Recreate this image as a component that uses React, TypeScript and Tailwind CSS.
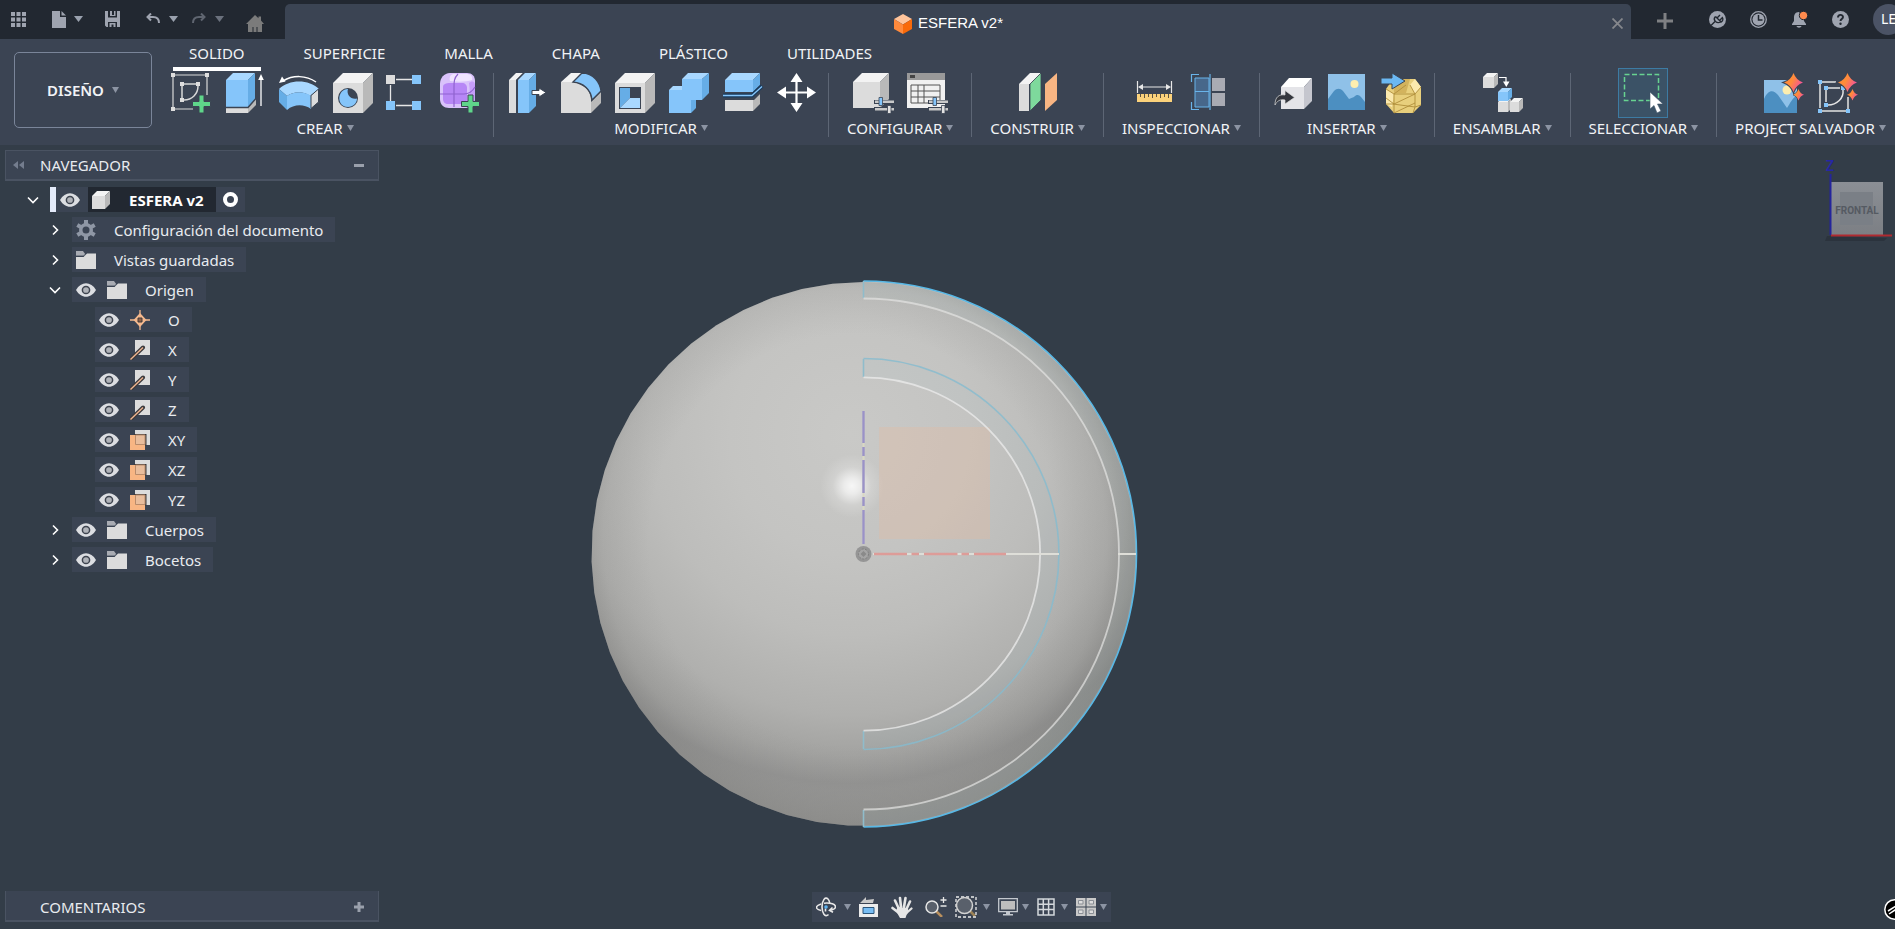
import type { ReactNode } from "react";

const BG = "#3b4453";
const BLUE = "#85c5fa";
const BLUE_TOP = "#a9d8ff";
const BLUE_SIDE = "#66ade6";

// ---------- shared pieces ----------

function Caret({ className = "text-[#9aa1ae]" }: { className?: string }) {
  return (
    <svg width="9" height="6" viewBox="0 0 9 6" className={`shrink-0 ${className}`} aria-hidden="true">
      <path d="M0 0h9L4.5 6z" fill="currentColor" />
    </svg>
  );
}

function SmallCaret() {
  return (
    <svg width="7" height="6" viewBox="0 0 7 6" className="shrink-0 text-[#8c94a3]" aria-hidden="true">
      <path d="M0 0h7L3.5 6z" fill="currentColor" />
    </svg>
  );
}

type BoxProps = { x: number; y: number; w: number; h: number; d: number; blue?: boolean };

// Box in oblique projection: x,y is the top left of the front face
function Box({ x, y, w, h, d, blue }: BoxProps) {
  return (
    <g>
      <path d={`M${x} ${y}h${w}v${h}h${-w}z`} fill={blue ? BLUE : "#dcdcdc"} />
      <path d={`M${x} ${y}l${d} ${-d}h${w}l${-d} ${d}z`} fill={blue ? BLUE_TOP : "#f3f3f3"} />
      <path d={`M${x + w} ${y}l${d} ${-d}v${h}l${-d} ${d}z`} fill={blue ? BLUE_SIDE : "#b9b9b9"} />
    </g>
  );
}

function Icon({ children }: { children: ReactNode }) {
  return (
    <svg width="40" height="40" viewBox="0 0 40 40" className="block overflow-visible" aria-hidden="true">
      {children}
    </svg>
  );
}

function Plus({ x, y }: { x: number; y: number }) {
  return (
    <path
      d={`M${x - 3} ${y - 9}h5v6.500h6.500v5h-6.500v6.500h-5v-6.500h-6.500v-5h6.500z`}
      fill="#5fd68a"
      stroke={BG}
      strokeWidth="1"
    />
  );
}

function Sliders() {
  return (
    <g>
      <path d="M21 27h20v4H21zM21 34h20v4H21z" fill={BG} />
      <path d="M22 27.500h19v2.500H22zM22 35h19v2.500H22z" fill="#c9c9c9" />
      <path d="M26 24.500h3.500v8H26z" fill={BLUE} stroke={BG} strokeWidth="0.800" />
      <path d="M34.500 32.500h3.500v8h-3.500z" fill="#e2e2e2" stroke={BG} strokeWidth="0.800" />
    </g>
  );
}

function Sparkles() {
  return (
    <g fill="url(#sparkle)">
      <path
        d="M30.500 0Q33 7 40 9.500Q33 12 30.500 19Q28 12 21 9.500Q28 7 30.500 0z"
        stroke={BG}
        strokeWidth="2"
        paintOrder="stroke"
      />
      <path
        d="M35.500 16Q37 20.500 41 21.700Q37 23 35.500 27.500Q34 23 30 21.700Q34 20.500 35.500 16z"
        stroke={BG}
        paintOrder="stroke"
      />
    </g>
  );
}

// ---------- ribbon icons ----------

const sketchIcon = (
  <Icon>
    <g stroke="#d9d9d9" strokeWidth="1.200" fill="none">
      <path d="M4 2h30M2 4v30M36 4v18M4 36h18" />
      <path d="M13 11h12M11 13v12M27 13c0 8-6 14-14 14" strokeWidth="1.500" />
    </g>
    <path d="M0 0h4v4H0zM34 0h4v4h-4zM0 34h4v4H0zM9 9h4v4H9zM25 9h4v4h-4zM9 25h4v4H9z" fill="#dedede" />
    <Plus x={31} y={31} />
  </Icon>
);

const extrudeIcon = (
  <Icon>
    <path d="M1 34h22v6H1z" fill="#dcdcdc" />
    <path d="M23 34l8-8v6l-8 8z" fill="#b9b9b9" />
    <Box x={1} y={7} w={22} h={27} d={7} blue />
    <path d="M1 34.500h22l7.500-8.500" stroke={BG} strokeWidth="1.500" fill="none" />
    <path d="M36 33V5" stroke="#fff" strokeWidth="1.300" />
    <path d="M36 1l2.800 6h-5.600z" fill="#fff" />
  </Icon>
);

const revolveIcon = (
  <Icon>
    <path d="M4 8C14 2 27 2 37 9" stroke="#fff" strokeWidth="1.500" fill="none" />
    <path d="M0 10l3-6.500 3.500 5z" fill="#fff" />
    <path d="M0 16C10 6 30 6 40 16l-9 7C25 18 15 18 8 23z" fill={BLUE_TOP} />
    <path d="M0 16l8 7v14l-8-8z" fill={BLUE_SIDE} />
    <path d="M8 23c7-5 17-5 24 0v13c-7-5-17-5-24 1z" fill={BLUE} />
    <path d="M32 22.500l7.500-6.500v13L32 35.500z" fill="#dcdcdc" stroke={BG} />
  </Icon>
);

const holeIcon = (
  <Icon>
    <Box x={0} y={10} w={30} h={30} d={10} />
    <circle cx="15" cy="25" r="10" fill={BG} />
    <path d="M15 16c-11 0-12 18 0 18 5 0 9-4 9-8.500-6 1.500-11-4-9-9.500z" fill={BLUE} />
  </Icon>
);

const patternIcon = (
  <Icon>
    <path d="M9 6.500h16M9 32.500h16M3.500 12v16" stroke="#e6e6e6" strokeWidth="1.300" />
    <path d="M-1 2h9v9h-9z" fill="#dcdcdc" />
    <path d="M25 2h9v9h-9zM-1 28h9v9h-9zM25 28h9v9h-9z" fill={BLUE} />
  </Icon>
);

const formIcon = (
  <Icon>
    <path d="M9 0h17c5 0 8 3 8 8v18c0 5-4 9-9 9H8c-5 0-9-3-9-9V11C-1 5 3 0 9 0z" fill="#d9c2fb" />
    <path d="M9 10h12c3 0 5 2 5 5v11c0 3-2 5-5 5H7c-3 0-5-2-5-5V14c0-3 3-4 7-4z" fill="#b787f6" />
    <path d="M12 1h14c4 0 6 3 5 6-5 2-16 2-22 1-1-3 0-6 3-7z" fill="#efe4ff" />
    <path d="M28 10c4-3 6-1 6 2v12c0 4-3 6-6 6 1-6 1-14 0-20z" fill="#c59df9" />
    <path d="M17 1c-4 4-4 8-4 13v20M-1 21h24c5 0 8-2 11-7" stroke="#8f63cf" strokeWidth="1.200" fill="none" />
    <Plus x={30} y={31} />
  </Icon>
);

const pressPullIcon = (
  <Icon>
    <Box x={2} y={7} w={7} h={33} d={7} />
    <path d="M9 7l7-7v40H9z" fill={BG} />
    <Box x={11} y={7} w={11} h={33} d={7} blue />
    <path d="M25 17.500h7V15l7 4.500-7 4.500v-2.500h-7z" fill="#fff" stroke={BG} strokeWidth="1" />
  </Icon>
);

const filletIcon = (
  <Icon>
    <path d="M0 9h12c12 2 18 10 18 18v13H0z" fill="#dcdcdc" />
    <path d="M0 9l10-9h11l-9 9z" fill="#f3f3f3" />
    <path d="M30 29l10-10v11L30 40z" fill="#b9b9b9" />
    <path d="M12 9l9-9c12 0 18 10 19 18l-9 9C30 16 22 10 12 9z" fill={BLUE} stroke={BG} strokeWidth="1.300" />
  </Icon>
);

const shellIcon = (
  <Icon>
    <Box x={0} y={10} w={30} h={30} d={10} />
    <path d="M4 14h22v22H4z" fill={BG} />
    <path d="M5 15h10v10L5 35z" fill={BLUE_SIDE} />
    <path d="M5 35l10-10h10v10z" fill={BLUE_TOP} />
  </Icon>
);

const combineIcon = (
  <Icon>
    <path d="M0 17h13V6h20v21H22v13H0z" fill={BLUE} />
    <path d="M0 17l4-4h9v4zM13 6l6-6h21l-7 6z" fill={BLUE_TOP} />
    <path d="M33 6l7-6v20l-7 7zM22 27h5v8l-5 5z" fill={BLUE_SIDE} />
  </Icon>
);

const splitIcon = (
  <Icon>
    <Box x={2} y={26} w={28} h={12} d={7} />
    <path d="M0 17h30l7-7h3v8l-9 9H0z" fill={BG} />
    <Box x={2} y={7} w={28} h={12} d={7} blue />
    <path d="M0 22.500h29l10-9.500" stroke="#183a5c" strokeWidth="4" fill="none" />
    <path d="M0 22.500h29l10-9" stroke={BLUE} strokeWidth="1.300" fill="none" />
  </Icon>
);

const moveIcon = (
  <Icon>
    <path d="M19.500 6v27M6 19.500h27" stroke="#fff" strokeWidth="2.200" />
    <path d="M19.500 0l6 9h-12zM19.500 39l6-9h-12zM0 19.500l9-6v12zM39 19.500l-9-6v12z" fill="#fff" />
  </Icon>
);

const configureIcon = (
  <Icon>
    <Box x={0} y={9} w={27} h={26} d={9} />
    <Sliders />
  </Icon>
);

const tableIcon = (
  <Icon>
    <path d="M0 0h38v35H0z" fill="#f1f1f1" />
    <path d="M0 0h38v7H0z" fill="#999" />
    <path d="M3 2h5v3H3z" fill="#444" />
    <path d="M4 12h29v18H4zM4 18h29M4 24h29M11 12v18M17 12v18" stroke="#555" fill="none" />
    <Sliders />
  </Icon>
);

const planeIcon = (
  <Icon>
    <path d="M1 11h10v27H1z" fill="#dcdcdc" />
    <path d="M1 11L12 0h11L12 11z" fill="#f3f3f3" />
    <path d="M12 11L23 0v27L12 38z" fill="#7ed99c" stroke={BG} strokeWidth="0.800" />
    <path d="M27 11L39 0v27L27 38z" fill="#f8b583" />
  </Icon>
);

const measureIcon = (
  <Icon>
    <path d="M3.500 8v12M37.500 8v12M6 14h29" stroke="#e8e8e8" strokeWidth="1.200" />
    <path d="M4 14l5-3v6zM37 14l-5-3v6z" fill="#e8e8e8" />
    <path d="M3 21h35v8H3z" fill="#fbd27b" />
    <path d="M6.500 21v3M10.500 21v4M14.500 21v3M18.500 21v4M22.500 21v3M26.500 21v4M30.500 21v3M34.500 21v4" stroke="#5d5340" />
  </Icon>
);

const sectionIcon = (
  <Icon>
    <path d="M24 5h13v13H24zM24 20h13v13H24z" fill="#a9abb3" />
    <path d="M7 5h14v29H7z" fill="#47678a" />
    <path d="M7 5h14v29H7zM7 18.500h14" stroke="#69b4ea" fill="none" />
    <path d="M22 1v36M11 1.500H3.500V9M11 36.500H3.500V29" stroke="#69b4ea" strokeWidth="1.200" fill="none" />
  </Icon>
);

const insertIcon = (
  <Icon>
    <path d="M8 14h23v22H8z" fill="#e4e4e8" />
    <path d="M8 14l8-9h23l-8 9z" fill="#fff" />
    <path d="M31 14l8-9v23l-8 8z" fill="#c5c6ce" />
    <path d="M2 32c0-8 4-11 10-10v-4.500l9.500 7L12 31v-4c-5-1-8 1-10 5z" fill="#34373e" stroke="#dcdcdc" strokeWidth="0.700" />
  </Icon>
);

const canvasIcon = (
  <Icon>
    <path d="M1 1h37v36H1z" fill="#8fc1e8" />
    <circle cx="27.500" cy="11" r="4" fill="#fdeeb0" />
    <path d="M1 26l6-8c3-3 6-3 9 0l6 8 5-2c3-3 5-2 7 0l4 5v8H1z" fill="#4c8fc1" />
  </Icon>
);

const meshIcon = (
  <Icon>
    <path d="M12 6h22l6 8v18l-8 8H13l-8-9V16z" fill="#e8cf7c" />
    <path d="M5 16l8 5-2 13-6-3zM34 6l6 8-6 7-5-9z" fill="#fbe9ae" />
    <path d="M12 6h17l-4 14H13z" fill="#d3b35d" />
    <path d="M5 16l8 5 21 0 6-7M29 12l5 9M13 21l12-9M5 31l8 0 21-10M13 21l0 19M12 31l22 3V21M40 32l-6 2-2 6M13 40l21-10M5 25l8 6" stroke="#b08f3b" strokeWidth="0.900" fill="none" />
    <path d="M0 5h11V0l13 8-13 8v-5H0z" fill="#6bb8f2" stroke={BG} />
  </Icon>
);

const assembleIcon = (
  <Icon>
    <Box x={1} y={4} w={11} h={11} d={4} />
    <path d="M17 4.500h7V11" stroke="#fff" strokeWidth="1.200" fill="none" />
    <path d="M21 8.500h6.500L24.300 14z" fill="#fff" />
    <Box x={16} y={29} w={10} h={10} d={3} />
    <Box x={28} y={29} w={9} h={10} d={4} />
    <Box x={16} y={19} w={10} h={9} d={4} blue />
  </Icon>
);

const selectIcon = (
  <Icon>
    <path d="M1.500 1.500h34v26h-34z" stroke="#67d391" strokeWidth="1.500" strokeDasharray="5 2.500" fill="none" />
    <path d="M27 19v17l4-3.500 3 7.500 4-2-3.500-7H40z" fill="#fff" stroke="#3d5266" strokeWidth="0.600" />
  </Icon>
);

const aiImageIcon = (
  <Icon>
    <path d="M1 7h33v33H1z" fill="#8fc1e8" />
    <path d="M1 26c4-9 9-10 14-4l9 13c4-6 4-8 10-13v18H1z" fill="#4c8fc1" />
    <circle cx="24" cy="17" r="4.500" fill="#fdeeb0" />
    <Sparkles />
  </Icon>
);

const aiSketchIcon = (
  <Icon>
    <g stroke="#e4e4e4" strokeWidth="1.500" fill="none">
      <path d="M5 9h14M3 11v24M5 38h24M31 24v12" />
      <path d="M11 15h12M9 17v12M26 17c1 8-6 15-15 15" />
    </g>
    <path d="M1 7h4v4H1zM1 36h4v4H1zM29 36h4v4h-4zM7 13h4v4H7zM24 13h4v4h-4zM7 30h4v4H7z" fill={BLUE} />
    <Sparkles />
  </Icon>
);

type Tool = { name: string; icon: ReactNode; active?: boolean };

const TABS = ["SOLIDO", "SUPERFICIE", "MALLA", "CHAPA", "PLÁSTICO", "UTILIDADES"];

const GROUPS: { label: string; tools: Tool[] }[] = [
  {
    label: "CREAR",
    tools: [
      { name: "Crear boceto", icon: sketchIcon },
      { name: "Extruir", icon: extrudeIcon },
      { name: "Revolución", icon: revolveIcon },
      { name: "Agujero", icon: holeIcon },
      { name: "Patrón", icon: patternIcon },
      { name: "Crear forma", icon: formIcon },
    ],
  },
  {
    label: "MODIFICAR",
    tools: [
      { name: "Pulsar/Tirar", icon: pressPullIcon },
      { name: "Empalme", icon: filletIcon },
      { name: "Vaciado", icon: shellIcon },
      { name: "Combinar", icon: combineIcon },
      { name: "Dividir", icon: splitIcon },
      { name: "Mover", icon: moveIcon },
    ],
  },
  {
    label: "CONFIGURAR",
    tools: [
      { name: "Configurar modelo", icon: configureIcon },
      { name: "Tabla", icon: tableIcon },
    ],
  },
  { label: "CONSTRUIR", tools: [{ name: "Plano", icon: planeIcon }] },
  {
    label: "INSPECCIONAR",
    tools: [
      { name: "Medir", icon: measureIcon },
      { name: "Sección", icon: sectionIcon },
    ],
  },
  {
    label: "INSERTAR",
    tools: [
      { name: "Insertar derivado", icon: insertIcon },
      { name: "Lienzo", icon: canvasIcon },
      { name: "Insertar malla", icon: meshIcon },
    ],
  },
  { label: "ENSAMBLAR", tools: [{ name: "Unión", icon: assembleIcon }] },
  { label: "SELECCIONAR", tools: [{ name: "Seleccionar", icon: selectIcon, active: true }] },
  {
    label: "PROJECT SALVADOR",
    tools: [
      { name: "Imagen", icon: aiImageIcon },
      { name: "Boceto", icon: aiSketchIcon },
    ],
  },
];

// ---------- title bar ----------

function TitleBar() {
  return (
    <header className="flex h-[39px] bg-[#222831] text-[#9fa4b0]">
      <div className="flex w-[285px] shrink-0 items-center gap-[22px] pb-px pl-[11px]">
        <button aria-label="Panel de datos" className="mr-1">
          <svg width="15" height="15" viewBox="0 0 15 15" fill="currentColor">
            <path d="M0 0h4v4H0zM5.500 0h4v4h-4zM11 0h4v4h-4zM0 5.500h4v4H0zM5.500 5.500h4v4h-4zM11 5.500h4v4h-4zM0 11h4v4H0zM5.500 11h4v4h-4zM11 11h4v4h-4z" />
          </svg>
        </button>
        <button aria-label="Archivo" className="flex items-center gap-2">
          <svg width="14" height="17" viewBox="0 0 14 17" fill="currentColor">
            <path d="M0 0h8v6h6v11H0z" />
            <path d="M9.500 0L14 4.500H9.500z" />
          </svg>
          <Caret />
        </button>
        <button aria-label="Guardar" className="mr-1">
          <svg width="15" height="16" viewBox="0 0 15 16" fill="currentColor">
            <path fillRule="evenodd" d="M0 0h3v6.500h9V0h3v16h-3v-5H3v5H1.500L0 14.500z" />
            <path d="M5 0h2v4h2V0h1.500v5H5zM4.500 12h6v4h-2v-2.500h-2V16h-2z" />
          </svg>
        </button>
        <div className="flex gap-[14px]">
          <button aria-label="Deshacer" className="flex items-center gap-[9px]">
            <svg width="14" height="12" viewBox="0 0 14 12" fill="none" stroke="currentColor" strokeWidth="2">
              <path d="M5 .500L1.500 4 5 7.500M2 4h5c4 0 6 2 6 6" />
            </svg>
            <Caret />
          </button>
          <button aria-label="Rehacer" className="flex items-center gap-[9px] text-[#5f6570]">
            <svg width="14" height="12" viewBox="0 0 14 12" fill="none" stroke="currentColor" strokeWidth="2">
              <path d="M9 .500L12.500 4 9 7.500M12 4H7c-4 0-6 2-6 6" />
            </svg>
            <Caret className="text-[#6b717d]" />
          </button>
        </div>
        <button aria-label="Inicio" className="pt-2 text-[#7b7b7b]">
          <svg width="18" height="17" viewBox="0 0 18 17" fill="currentColor">
            <path d="M9 0l3.500 3.200V1.500H15v4L18 9h-2v8h-4.500v-5h-1v5h-3v-5h-1v5H2V9H0z" />
          </svg>
        </button>
      </div>

      <div className="mt-1 flex flex-1 items-center rounded-t-[5px] bg-[#3b4453] pt-1">
        <div className="flex flex-1 items-center justify-center gap-[6px] font-['Liberation_Sans',Arial,sans-serif] text-[15px] text-white">
          <svg width="18" height="20" viewBox="0 0 18 20" aria-hidden="true">
            <path d="M9 0l9 5-9 5.500L0 5z" fill="#ffc49b" />
            <path d="M0 5l9 5.500V20l-9-5z" fill="#ff8a3c" />
            <path d="M18 5l-9 5.500V20l9-5z" fill="#f96a0a" />
          </svg>
          <span>ESFERA v2*</span>
        </div>
        <button aria-label="Cerrar pestaña" className="mr-2 text-[#85878c]">
          <svg width="11" height="11" viewBox="0 0 11 11" stroke="currentColor" strokeWidth="1.800">
            <path d="M.500 .500l10 10M10.500 .500l-10 10" />
          </svg>
        </button>
      </div>

      <div className="flex w-[264px] shrink-0 items-center overflow-hidden pb-px pl-[26px]">
        <button aria-label="Nuevo diseño" className="mr-[36px] pt-1 text-[#7f8083]">
          <svg width="16" height="16" viewBox="0 0 16 16" fill="currentColor">
            <path d="M6.500 0h3v6.500H16v3H9.500V16h-3V9.500H0v-3h6.500z" />
          </svg>
        </button>
        <div className="flex shrink-0 items-center gap-6">
          <button aria-label="Extensiones">
            <svg width="17" height="17" viewBox="0 0 17 17">
              <circle cx="8.500" cy="8.500" r="8.500" fill="#9fa4b0" />
              <path d="M2 14.500l4-4M6.500 5.500l5.500 5.500c2-1 2.500-3 1-5M6.500 5.500c-1.500 1.500-1.500 3.500 0 5 1.500 1.300 3.500 1.300 5 .5M8.500 6.500l2.500-2.500M11 9l2.500-2.500" stroke="#222831" strokeWidth="1.400" fill="none" />
            </svg>
          </button>
          <button aria-label="Estado de trabajos">
            <svg width="17" height="17" viewBox="0 0 17 17">
              <circle cx="8.500" cy="8.500" r="7.800" fill="none" stroke="#9fa4b0" strokeWidth="1.300" />
              <circle cx="8.500" cy="8.500" r="6" fill="#9fa4b0" />
              <path d="M8.500 4v5h4" stroke="#222831" strokeWidth="1.500" fill="none" />
            </svg>
          </button>
          <button aria-label="Notificaciones">
            <svg width="17" height="17" viewBox="0 0 17 17">
              <path d="M8 1c-4 0-5 3-5 6v3l-2 3v1h14v-1l-2-3V8z" fill="#9fa4b0" />
              <path d="M5.500 15h5c-.5 2.300-4.500 2.300-5 0z" fill="#9fa4b0" />
              <circle cx="12.500" cy="4.500" r="4.200" fill="#ff8a4d" stroke="#222831" />
            </svg>
          </button>
          <button aria-label="Ayuda">
            <svg width="17" height="17" viewBox="0 0 17 17">
              <circle cx="8.500" cy="8.500" r="8.500" fill="#9fa4b0" />
              <path d="M6 6.500c0-3.500 5-3.300 5-.5 0 2-2.500 2-2.500 4" stroke="#222831" strokeWidth="1.900" fill="none" />
              <circle cx="8.500" cy="12.800" r="1.200" fill="#222831" />
            </svg>
          </button>
          <button className="size-[31px] rounded-full bg-[#4b5365] text-sm text-white">LE</button>
        </div>
      </div>
    </header>
  );
}

// ---------- ribbon ----------

function Ribbon() {
  return (
    <div className="flex h-[106px] overflow-hidden bg-[#3b4453] text-[15px] leading-5 text-[#f1f3f6]">
      <button className="mt-[13px] ml-[14px] flex h-[76px] w-[138px] shrink-0 items-center justify-center gap-2 rounded-[5px] border border-[#7a8599] font-semibold">
        DISEÑO
        <SmallCaret />
      </button>

      <div className="ml-[6px] flex flex-col">
        <nav className="ml-[15px] flex gap-[27px]">
          {TABS.map((tab, i) => (
            <button
              key={tab}
              className={`h-8 border-b-4 px-4 leading-5 ${i === 0 ? "border-white" : "border-transparent"}`}
            >
              {tab}
            </button>
          ))}
        </nav>

        <div className="mt-[2px] flex">
          {GROUPS.map((group, i) => (
            <section
              key={group.label}
              className={`flex h-16 shrink-0 flex-col items-center ${i < GROUPS.length - 1 ? "border-r border-[#5d6675]" : ""} ${i === 0 ? "pr-px" : ""}`}
            >
              <div className={`flex h-10 items-center gap-[14px] ${i < 2 ? "pr-[11px] pl-[13px]" : "px-[13px]"}`}>
                {group.tools.map((tool) => (
                  <button
                    key={tool.name}
                    aria-label={tool.name}
                    className={tool.active ? "-my-1 border border-[#3d7ba3] bg-[#3b5266] p-1" : ""}
                  >
                    {tool.icon}
                  </button>
                ))}
              </div>
              <button className="mt-[5px] flex items-center gap-1 px-[18px] whitespace-nowrap">
                {group.label}
                <SmallCaret />
              </button>
            </section>
          ))}
        </div>
      </div>

      <svg width="0" height="0" aria-hidden="true">
        <defs>
          <linearGradient id="sparkle" x1="0.200" y1="0.300" x2="0.900" y2="0.700">
            <stop offset="0.300" stopColor="#ff8c3a" />
            <stop offset="1" stopColor="#f4509f" />
          </linearGradient>
        </defs>
      </svg>
    </div>
  );
}

// ---------- browser tree ----------

const eyeIcon = (
  <svg width="20" height="14" viewBox="0 0 20 14" className="block" aria-hidden="true">
    <path d="M0 7c5-9 15-9 20 0-5 9-15 9-20 0z" fill="#dcdee2" />
    <circle cx="10" cy="7" r="3.600" fill="#b0b3b9" stroke="#3f4550" strokeWidth="1.500" />
  </svg>
);

const folderIcon = (
  <svg width="20" height="18" viewBox="0 0 20 18" aria-hidden="true">
    <path d="M0 0h7l2.500 3.500L8 5H0z" fill="#a9acb3" />
    <path d="M0 6h7.500L11 2.500h9V18H0z" fill="#dcdcdc" />
    <path d="M0 5h7.500l2.500-2.500" stroke={BG} strokeWidth="0.800" fill="none" />
  </svg>
);

const gearIcon = (
  <svg width="20" height="20" viewBox="0 0 20 20" aria-hidden="true">
    <path d="M8 0h4v20H8z M0.300 6.700l2-3.500 17.400 10.100-2 3.500z M2.300 16.800l-2-3.500L17.700 3.200l2 3.500z" fill="#8f97a5" />
    <circle cx="10" cy="10" r="7" fill="#8f97a5" />
    <circle cx="10" cy="10" r="3.500" fill={BG} />
  </svg>
);

const pointIcon = (
  <svg width="20" height="20" viewBox="0 0 20 20" aria-hidden="true">
    <path d="M10 0v20M0 10h20" stroke="#f5b98e" strokeWidth="1.300" />
    <path d="M10 3l6.500 7-6.500 7-6.500-7z" fill="#f5b98e" />
    <path d="M8 8h4v4H8z" fill="#8c5f49" stroke="#3f3a3a" />
  </svg>
);

const axisIcon = (
  <svg width="20" height="20" viewBox="0 0 20 20" aria-hidden="true">
    <path d="M5 0h15v15H5z" fill="#dcdcdc" />
    <path d="M1 19L13 7.500" stroke="#3c3a3d" strokeWidth="4" strokeLinecap="round" />
    <path d="M.500 19.500L13 7.500" stroke="#f0b58f" strokeWidth="1.400" />
  </svg>
);

const planeTreeIcon = (
  <svg width="20" height="20" viewBox="0 0 20 20" aria-hidden="true">
    <path d="M5 0h15v15H5z" fill="#dcdcdc" />
    <path d="M4 4h12.500v12H4z" fill="#3c3a3d" />
    <path d="M0 5h15v15H0z" fill="#f8b583" />
    <path d="M5.500 5h9.500v9.500H5.500z" fill="#e9bd9c" stroke="#b98b6b" />
  </svg>
);

type Node = { label: string; level: 1 | 2; icon: ReactNode; eye?: boolean; open?: boolean };

const NODES: Node[] = [
  { label: "Configuración del documento", level: 1, icon: gearIcon },
  { label: "Vistas guardadas", level: 1, icon: folderIcon },
  { label: "Origen", level: 1, icon: folderIcon, eye: true, open: true },
  { label: "O", level: 2, icon: pointIcon, eye: true },
  { label: "X", level: 2, icon: axisIcon, eye: true },
  { label: "Y", level: 2, icon: axisIcon, eye: true },
  { label: "Z", level: 2, icon: axisIcon, eye: true },
  { label: "XY", level: 2, icon: planeTreeIcon, eye: true },
  { label: "XZ", level: 2, icon: planeTreeIcon, eye: true },
  { label: "YZ", level: 2, icon: planeTreeIcon, eye: true },
  { label: "Cuerpos", level: 1, icon: folderIcon, eye: true },
  { label: "Bocetos", level: 1, icon: folderIcon, eye: true },
];

function Chevron({ open }: { open?: boolean }) {
  return (
    <button aria-label={open ? "Contraer" : "Expandir"} className="mr-2 flex w-[18px] shrink-0 justify-center">
      <svg width="12" height="12" viewBox="0 0 12 12" fill="none" stroke="#fff" strokeWidth="1.600">
        <path d={open ? "M1 3.500l5 5 5-5" : "M4 1.500l4.500 4.500L4 10.500"} />
      </svg>
    </button>
  );
}

function Browser() {
  return (
    <aside className="flex flex-col text-[15px] leading-5 text-[#e8ebef]">
      <div className="mt-[5px] ml-[5px] flex h-[31px] w-[374px] items-center border border-b-2 border-[#4a5362] bg-[#3b4453] pr-[14px] pl-[7px]">
        <button aria-label="Ocultar navegador">
          <svg width="11" height="8" viewBox="0 0 11 8" fill="#747d8e">
            <path d="M5 0v8L0 4zM11 0v8L6 4z" />
          </svg>
        </button>
        <h2 className="ml-4 flex-1">NAVEGADOR</h2>
        <button aria-label="Minimizar" className="h-[3px] w-[10px] bg-[#9aa0ac]" />
      </div>

      <ul className="mt-[6px] flex flex-col gap-[5px]">
        <li className="flex h-[25px] items-center pl-6">
          <Chevron open />
          <span className="h-full w-[6px] bg-[#e4ebfa]" />
          <div className="flex h-full items-center bg-[#3b4453]">
            <button aria-label="Visibilidad" className="px-1">
              {eyeIcon}
            </button>
            <button className="ml-1 flex h-full items-center gap-[19px] bg-[#222831] pr-3 pl-1 font-bold text-white">
              <svg width="18" height="18" viewBox="0 0 18 18" aria-hidden="true">
                <Box x={0} y={5} w={13} h={13} d={5} />
              </svg>
              ESFERA v2
            </button>
            <label className="flex px-[7px]">
              <input
                type="radio"
                defaultChecked
                aria-label="Activar componente"
                className="size-[15px] appearance-none rounded-full border-4 border-white bg-[#3b4453]"
              />
            </label>
          </div>
        </li>

        {NODES.map((node) => (
          <li
            key={node.label}
            className={`flex h-[25px] items-center ${node.level === 1 ? "pl-[46px]" : "pl-[95px]"}`}
          >
            {node.level === 1 && <Chevron open={node.open} />}
            <div className="flex h-full items-center bg-[#3b4453] pr-3 pl-1">
              {node.eye && (
                <button aria-label={`Visibilidad de ${node.label}`} className="mr-[11px]">
                  {eyeIcon}
                </button>
              )}
              <button className="flex items-center gap-[18px]">
                {node.icon}
                {node.label}
              </button>
            </div>
          </li>
        ))}
      </ul>
    </aside>
  );
}

// ---------- viewport ----------

const CX = 863.5;
const CY = 409;

// The body is tessellated, so its silhouette is made of straight facets
const silhouette = Array.from({ length: 55 }, (_, i) => {
  const a = (i * 2 * Math.PI) / 55;
  return `${(CX - Math.sin(a) * 272).toFixed(1)},${(CY - Math.cos(a) * 272).toFixed(1)}`;
}).join(" ");

const halfRing = (outer: number, inner: number) =>
  `M${CX} ${CY - outer}A${outer} ${outer} 0 0 1 ${CX} ${CY + outer}V${CY + inner}A${inner} ${inner} 0 0 0 ${CX} ${CY - inner}z`;

const halfArc = (r: number) => `M${CX} ${CY - r}A${r} ${r} 0 0 1 ${CX} ${CY + r}`;

function Scene() {
  return (
    <svg
      viewBox="0 0 1895 784"
      preserveAspectRatio="xMidYMid meet"
      className="absolute inset-0 size-full"
      role="img"
      aria-label="Vista frontal de la esfera"
    >
      <defs>
        <radialGradient id="body" gradientUnits="userSpaceOnUse" cx="850" cy="290" r="400">
          <stop offset="0" stopColor="#c9c9c7" />
          <stop offset="0.300" stopColor="#c4c4c2" />
          <stop offset="0.500" stopColor="#bdbdbb" />
          <stop offset="0.700" stopColor="#b0b0ae" />
          <stop offset="0.800" stopColor="#a3a3a1" />
          <stop offset="0.870" stopColor="#959594" />
          <stop offset="0.960" stopColor="#9f9f9d" />
          <stop offset="1" stopColor="#a2a2a0" />
        </radialGradient>
        <radialGradient id="rim" gradientUnits="userSpaceOnUse" cx="855" cy="395" r="286">
          <stop offset="0.720" stopColor="#70706e" stopOpacity="0" />
          <stop offset="0.880" stopColor="#70706e" stopOpacity="0.120" />
          <stop offset="1" stopColor="#70706e" stopOpacity="0.420" />
        </radialGradient>
        <radialGradient id="glow" gradientUnits="userSpaceOnUse" cx="852" cy="341" r="32">
          <stop offset="0" stopColor="#fff" stopOpacity="0.850" />
          <stop offset="0.250" stopColor="#fff" stopOpacity="0.650" />
          <stop offset="0.600" stopColor="#fff" stopOpacity="0.180" />
          <stop offset="1" stopColor="#fff" stopOpacity="0" />
        </radialGradient>
      </defs>

      <polygon points={silhouette} fill="url(#body)" />
      <path d={`${halfArc(273)}z`} fill="url(#body)" />
      <polygon points={silhouette} fill="url(#rim)" />
      <circle cx="852" cy="341" r="32" fill="url(#glow)" />

      {/* XZ plane */}
      <path d="M879 282h111v112H879z" fill="#e8b99a" fillOpacity="0.300" />

      {/* sketch profiles */}
      <path d={halfRing(273, 255.5)} fill="#9fb5b5" fillOpacity="0.120" />
      <path d={halfRing(195.5, 176.7)} fill="#8fb5c0" fillOpacity="0.070" />
      <g fill="none" strokeWidth="1.600">
        <path d={halfArc(273)} stroke="#58b8e6" />
        <path d={halfArc(195.5)} stroke="#85bcd0" strokeOpacity="0.800" />
        <path
          d={`M${CX} ${CY - 273}v17M${CX} ${CY + 273}v-17M${CX} ${CY - 195}v18M${CX} ${CY + 195}v-18`}
          stroke="#8fbccb"
        />
        <path d={halfArc(255.5)} stroke="#e4e4e2" strokeWidth="1.800" strokeOpacity="0.700" />
        <path d={halfArc(176.7)} stroke="#ececec" strokeWidth="1.800" strokeOpacity="0.750" />
        <path d={`M873 ${CY}H1059M1118 ${CY}h18`} stroke="#deded8" strokeWidth="1.800" />
      </g>

      {/* axes */}
      <path
        d={`M874 ${CY}h33M911.500 ${CY}h7.500M924 ${CY}h33.500M961.500 ${CY}h7.500M974 ${CY}h32`}
        stroke="#dd9c98"
        strokeWidth="2.400"
      />
      <path d={`M${CX} 266V399`} stroke="#d9d8c2" strokeWidth="2" />
      <path
        d={`M${CX} 266v32M${CX} 302v9M${CX} 315v33M${CX} 352v9M${CX} 365v34`}
        stroke="#9a92c8"
        strokeWidth="2.400"
      />
      <circle cx={CX} cy={CY} r="8" fill="#959595" />
      <circle cx={CX} cy={CY} r="5" fill="#a5a5a5" stroke="#7f7f7f" strokeDasharray="2 1.500" />
      <path d={`M${CX} ${CY - 3}l3 3-3 3-3-3z`} fill="#8a8a8a" />
    </svg>
  );
}

function ViewCube() {
  return (
    <svg width="70" height="90" viewBox="0 0 70 90" className="mt-[12px] shrink-0" role="img" aria-label="ViewCube">
      <defs>
        <linearGradient id="face" x1="0" y1="0" x2="0" y2="1">
          <stop offset="0" stopColor="#8b8f95" />
          <stop offset="1" stopColor="#7c7f84" />
        </linearGradient>
      </defs>
      <path d="M2 79l60 2-3 3H0z" fill="#20262e" fillOpacity="0.400" />
      <path d="M6 25h52v53H6z" fill="url(#face)" />
      <path d="M15 35h33v33H15z" fill="#7a7f86" />
      <text x="32" y="57" textAnchor="middle" className="font-['Roboto',sans-serif] text-[10px] font-bold" fill="#555a62">
        FRONTAL
      </text>
      <path d="M5.500 17v61" stroke="#24249c" strokeWidth="2" />
      <path d="M6 78.500h61" stroke="#b02a30" strokeWidth="2" />
      <text x="5" y="14" textAnchor="middle" className="font-['Roboto',sans-serif] text-[14px] font-medium" fill="#2626a6">
        Z
      </text>
    </svg>
  );
}

// ---------- navigation bar ----------

const orbitIcon = (
  <svg width="20" height="20" viewBox="0 0 20 20" fill="none" stroke="#e8e8e8" strokeWidth="1.600">
    <path d="M12.500 17.500C9 21 6 16 6 10S9-1 12 2c1 1 1.500 2.500 1.700 4" />
    <path d="M5 7c-6 2-6 5 0 6.500M8 6.200c7-.7 11.500 1.300 11.500 3.500 0 1.800-2.500 3-5.500 3.500" />
    <path d="M16.500 10.500L13.500 13.300l3.500 2M9.500 11.500v3" />
    <circle cx="10" cy="10" r="1.800" fill="#5cb1ef" stroke="none" />
  </svg>
);

const lookIcon = (
  <svg width="20" height="20" viewBox="0 0 20 20">
    <path d="M1 6l6-6v3l8-1-1 4z" fill="#c9c9c9" />
    <path d="M0 7h19v13H0z" fill="#ececec" />
    <path d="M4 10.500h11v6H4z" fill="#78bdf3" stroke="#2b557a" />
  </svg>
);

const handIcon = (
  <svg width="22" height="22" viewBox="0 0 22 22" fill="none" stroke="#e6e6e6" strokeLinecap="round">
    <path d="M7.500 12L4 4.500M10 11L9 2M13 11l1.500-9M15.500 13L19 5.500M8 17l-6.500-5" strokeWidth="2.600" />
    <path d="M6.500 11l10 1c1 0 1 5-1 7l-1 3H9l-4-7z" fill="#e6e6e6" stroke="none" />
    <path d="M15.500 17l5-4.500" strokeWidth="2.200" />
  </svg>
);

const zoomIcon = (
  <svg width="22" height="20" viewBox="0 0 22 20" fill="none">
    <path d="M11 14l6 6" stroke="#b98f5e" strokeWidth="2.500" />
    <circle cx="7" cy="10" r="6" fill="#59606b" stroke="#e6e6e6" strokeWidth="1.500" />
    <path d="M18.500 0v6M15.500 3h6M15.500 9h6" stroke="#e6e6e6" strokeWidth="1.300" />
  </svg>
);

const zoomWindowIcon = (
  <svg width="22" height="22" viewBox="0 0 22 22" fill="none">
    <path d="M15 15l5 5" stroke="#9c8256" strokeWidth="2.500" />
    <path d="M1 1h20v20H1z" stroke="#ececec" strokeWidth="1.300" strokeDasharray="3 2" />
    <circle cx="9.500" cy="9.500" r="8" fill="#59606b" stroke="#d2d2d2" strokeWidth="1.500" />
  </svg>
);

const displayIcon = (
  <svg width="20" height="18" viewBox="0 0 20 18">
    <path d="M.700 .700h18.600v13H.700z" fill="#3b4453" stroke="#c4c8ce" strokeWidth="1.300" />
    <path d="M3 3h14v8.500H3z" fill="#bdbdbd" />
    <path d="M8 14h4v2h3v1.500H5V16h3z" fill="#c4c8ce" />
  </svg>
);

const gridIcon = (
  <svg width="18" height="18" viewBox="0 0 18 18" fill="none" stroke="#d4d7dc" strokeWidth="1.500">
    <path d="M1 1h16v16H1zM1 6.300h16M1 11.600h16M6.300 1v16M11.600 1v16" />
  </svg>
);

const viewsIcon = (
  <svg width="20" height="18" viewBox="0 0 20 18">
    <path d="M0 0h9.500v8.500H0zM10.500 0H20v8.500h-9.500zM0 9.500h9.500V18H0zM10.500 9.500H20V18h-9.500z" fill="#c9c9c9" />
    <path d="M2.500 2.500h4.500v3.500H2.500zM13 2.500h4.500v3.500H13zM2.500 12h4.500v3.500H2.500zM13 12h4.500v3.500H13z" fill="#dedede" stroke="#8b8f96" />
  </svg>
);

function NavBar() {
  return (
    <div className="flex h-[30px] shrink-0 items-center gap-2 bg-[#3b4453] px-1">
      <button aria-label="Órbita" className="flex items-center gap-2">
        {orbitIcon}
        <SmallCaret />
      </button>
      <button aria-label="Mirar a">{lookIcon}</button>
      <button aria-label="Encuadre" className="mx-1">
        {handIcon}
      </button>
      <button aria-label="Zoom">{zoomIcon}</button>
      <button aria-label="Ventana de zoom" className="flex items-center gap-[6px]">
        {zoomWindowIcon}
        <SmallCaret />
      </button>
      <button aria-label="Configuración de visualización" className="flex items-center gap-1">
        {displayIcon}
        <SmallCaret />
      </button>
      <button aria-label="Rejilla" className="flex items-center gap-[6px]">
        {gridIcon}
        <SmallCaret />
      </button>
      <button aria-label="Ventanas gráficas" className="flex items-center gap-1">
        {viewsIcon}
        <SmallCaret />
      </button>
    </div>
  );
}

export default function App() {
  return (
    <div className="flex min-h-screen flex-col overflow-hidden bg-[#333d48] font-['Noto_Sans',sans-serif]">
      <TitleBar />
      <Ribbon />
      <main className="relative flex flex-1 flex-col justify-between overflow-hidden">
        <Scene />
        <div className="relative flex justify-between">
          <Browser />
          <ViewCube />
        </div>
        <div className="relative flex items-end pb-[7px]">
          <div className="w-3/7 shrink-0">
            <div className="ml-[5px] flex h-[31px] w-[374px] items-center justify-between border border-t-0 border-b-2 border-[#4a5362] bg-[#3b4453] pt-[2px] pr-[14px] pl-[34px] text-[15px] leading-5 text-[#e8ebef]">
              <h2>COMENTARIOS</h2>
              <button aria-label="Añadir comentario">
                <svg width="10" height="10" viewBox="0 0 10 10" fill="#9aa0ac">
                  <path d="M3.500 0h3v3.500H10v3H6.500V10h-3V6.500H0v-3h3.500z" />
                </svg>
              </button>
            </div>
          </div>
          <NavBar />
          <button aria-label="Asistente" className="-mr-[10px] mb-[2px] ml-auto">
            <svg width="21" height="21" viewBox="0 0 21 21">
              <circle cx="10.500" cy="10.500" r="9.700" fill="#000" stroke="#fff" strokeWidth="1.500" />
              <path d="M4 12l8-5M5 15l9-6" stroke="#fff" strokeWidth="1.500" />
            </svg>
          </button>
        </div>
      </main>
    </div>
  );
}
